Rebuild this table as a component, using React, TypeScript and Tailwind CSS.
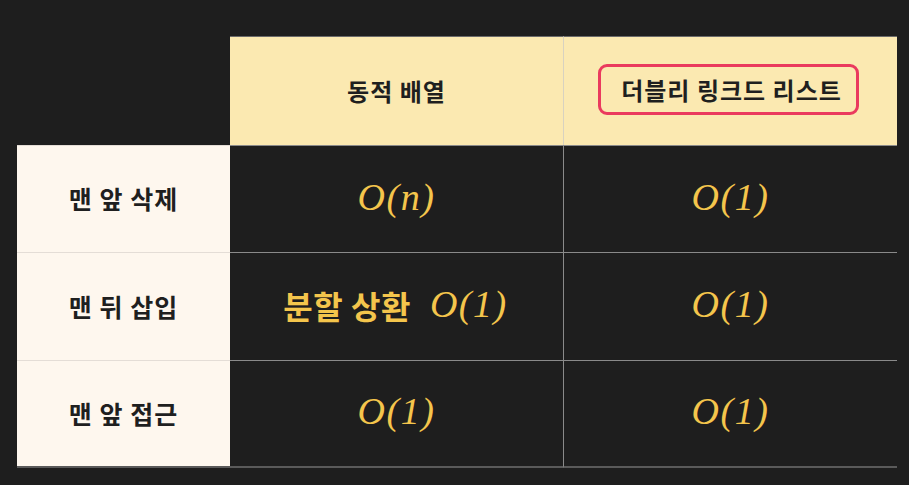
import React from "react";

const ko = { fontFamily: '"Noto Sans CJK KR", "Noto Sans", sans-serif' };
const math = { fontFamily: '"Liberation Serif", "DejaVu Serif", serif' };

function M({ children }: { children: React.ReactNode }) {
  return (
    <span style={math} className="italic text-[38px] leading-none text-[#f4c54c] tracking-[1.5px] mt-[-5px]">
      {children}
    </span>
  );
}

function RowHead({ children, last }: { children: React.ReactNode; last?: boolean }) {
  return (
    <div
      style={ko}
      className={`bg-[#fef7ee] flex items-center justify-center text-[25px] font-bold text-[#1f1f1f] tracking-[1px] border-t border-[#e4ddd6] ${last ? "border-b-2 border-b-[#5a5a5a]" : ""}`}
    >
      {children}
    </div>
  );
}

function Cell({ children, right, last }: { children: React.ReactNode; right?: boolean; last?: boolean }) {
  return (
    <div
      className={`bg-[#1e1e1e] flex items-center justify-center border-t border-[#8a8a8a] ${right ? "border-l" : ""} ${last ? "border-b-2 border-b-[#5a5a5a]" : ""}`}
    >
      {children}
    </div>
  );
}

export default function App() {
  return (
    <div className="w-[909px] h-[485px] bg-[#1e1e1e] pt-[36px] pl-[17px]">
      <div className="grid grid-cols-[213px_333px_334px] grid-rows-[109px_107px_108px_108px]">
        <div />
        <div
          style={ko}
          className="bg-[#fbe9b1] flex items-center justify-center text-[24px] font-bold text-[#1f1f1f] tracking-[1px] border-t border-[#6a6a6a]"
        >
          동적 배열
        </div>
        <div className="bg-[#fbe9b1] flex items-center justify-center border-t border-l border-[#d8d2c0] border-t-[#6a6a6a]">
          <div
            style={ko}
            className="ml-[-4px] mt-[-3px] h-[51px] w-[261px] rounded-[9px] border-[3px] border-[#ea3a5e] flex items-center justify-center pl-[6px] text-[24px] font-bold text-[#1f1f1f] tracking-[1px] whitespace-nowrap"
          >
            더블리 링크드 리스트
          </div>
        </div>

        <RowHead>맨 앞 삭제</RowHead>
        <Cell><M>O(n)</M></Cell>
        <Cell right><M>O(1)</M></Cell>

        <RowHead>맨 뒤 삽입</RowHead>
        <Cell>
          <div className="flex items-center gap-[19px] pr-[2px]">
            <span style={ko} className="text-[32px] font-bold text-[#f4c54c] tracking-[0.5px] mt-[-3px]">분할 상환</span>
            <M>O(1)</M>
          </div>
        </Cell>
        <Cell right><M>O(1)</M></Cell>

        <RowHead last>맨 앞 접근</RowHead>
        <Cell last><M>O(1)</M></Cell>
        <Cell right last><M>O(1)</M></Cell>
      </div>
    </div>
  );
}
